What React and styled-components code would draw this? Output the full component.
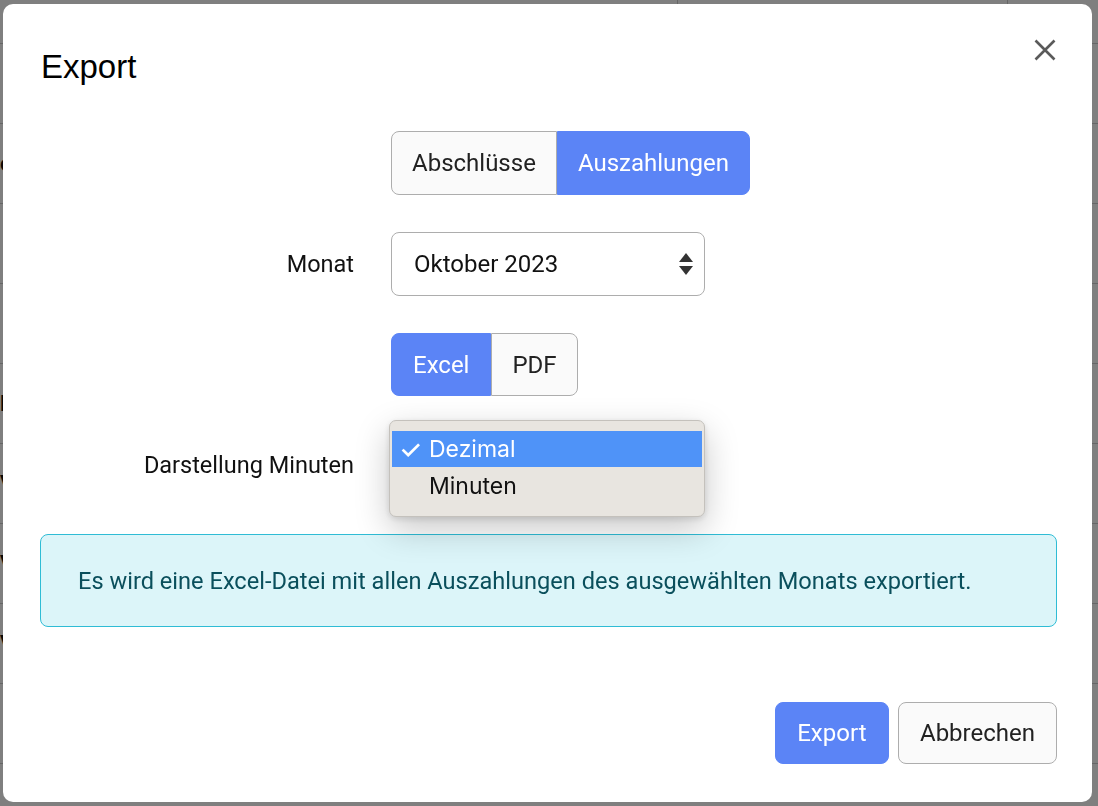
import React from 'react'
import styled, { createGlobalStyle } from 'styled-components'

const GlobalStyle = createGlobalStyle`
  html, body {
    margin: 0;
    padding: 0;
    height: 100%;
    overflow: hidden;
  }
  body {
    font-family: Roboto, 'Liberation Sans', sans-serif;
    color: #111;
    background: #ffffff;
  }
  * {
    box-sizing: border-box;
  }
`

// page behind the dialog (only a few pixels of it show)
const Page = styled.div`
  height: 100vh;
  display: flex;
  flex-direction: column;
`

const PageHead = styled.div`
  height: 44px;
  display: flex;
  justify-content: flex-end;
  border-bottom: 1px solid #ccc;
`

const HeadCell = styled.div`
  width: ${p => p.w}px;
  border-left: 1px solid #ccc;
  display: flex;
  align-items: center;
  gap: 10px;
  padding-left: 20px;
  color: #1d3a8a;
  font-size: 18px;
`

const PageRow = styled.div`
  height: 80px;
  border-bottom: 1px solid #ccc;
  display: flex;
  align-items: center;
  font-size: 22px;
  font-weight: 700;
`

const Backdrop = styled.div`
  position: fixed;
  inset: 0;
  background: rgba(0, 0, 0, 0.5);
  display: flex;
  padding: 4px 6px 4px 3px;
`

const Modal = styled.div`
  flex: 1;
  background: #fff;
  border-radius: 10px;
  display: flex;
  flex-direction: column;
`

const Header = styled.div`
  display: flex;
  justify-content: space-between;
  align-items: flex-start;
  padding: 34px 35px 0 37px;
`

const Title = styled.h2`
  margin: 10px 0 0 1px;
  font-family: 'Liberation Sans', Arial, sans-serif;
  font-weight: 400;
  font-size: 33px;
  line-height: 38px;
  color: #000;
`

const CloseButton = styled.button`
  width: 24px;
  height: 24px;
  padding: 0;
  border: 0;
  background: none;
  display: flex;
  align-items: center;
  justify-content: center;
  cursor: pointer;
`

const Body = styled.div`
  display: flex;
  flex-direction: column;
  gap: 37px;
  padding: 45px 35px 0 37px;
`

const FormRow = styled.div`
  display: grid;
  grid-template-columns: 314px auto;
  column-gap: 37px;
  align-items: center;
`

const Label = styled.label`
  text-align: right;
  font-size: 23.5px;
  color: #111;
`

const Control = styled.div`
  display: flex;
  position: relative;
`

const Group = styled.div`
  display: flex;
`

const Btn = styled.button`
  height: ${p => p.h || 64}px;
  padding: 0 ${p => p.pad || 20}px;
  font-family: Roboto, sans-serif;
  font-size: 24px;
  border: 1px solid ${p => (p.active ? '#5b84f6' : '#adadad')};
  background: ${p => (p.active ? '#5b84f6' : '#fafafa')};
  color: ${p => (p.active ? '#fff' : '#222')};
  border-radius: 8px;
  cursor: pointer;

  ${Group} > & + & {
    margin-left: -1px;
  }
  ${Group} > &:not(:last-child) {
    border-top-right-radius: 0;
    border-bottom-right-radius: 0;
  }
  ${Group} > &:not(:first-child) {
    border-top-left-radius: 0;
    border-bottom-left-radius: 0;
  }
`

const SelectBox = styled.div`
  width: 314px;
  height: 64px;
  border: 1px solid #adadad;
  border-radius: 8px;
  background: #fff;
  display: flex;
  align-items: center;
  justify-content: space-between;
  padding: 0 11px 0 22px;
  font-size: 24px;
  color: #111;
`

const Popup = styled.div`
  position: absolute;
  top: -13px;
  left: -2px;
  width: 316px;
  padding: 10px 2px 11px;
  background: #e8e5e0;
  border: 1px solid #c4c1bc;
  border-radius: 7px;
  box-shadow: 0 12px 34px rgba(0, 0, 0, 0.22), 0 2px 6px rgba(0, 0, 0, 0.12);
  font-family: Inter, 'Noto Sans', sans-serif;
  font-size: 23px;
`

const Option = styled.div`
  height: ${p => (p.selected ? 36 : 38)}px;
  display: flex;
  align-items: center;
  background: ${p => (p.selected ? '#4f93f8' : 'transparent')};
  color: ${p => (p.selected ? '#fff' : '#111')};
`

const Check = styled.span`
  width: 37px;
  padding-left: 7px;
  font-size: 26px;
  font-weight: 500;
`

const Alert = styled.div`
  border: 1px solid #2fbcd5;
  background: #dcf5f9;
  border-radius: 8px;
  height: 93px;
  display: flex;
  align-items: center;
  padding: 0 37px;
  color: #0a4f5c;
  font-size: 23.6px;
  white-space: nowrap;
`

const Footer = styled.div`
  display: flex;
  justify-content: flex-end;
  gap: 9px;
  padding: 75px 35px 0;
`

const Arrows = () => (
  <svg width="14" height="23" viewBox="0 0 14 23">
    <path d="M7 0 L14 9 L0 9 Z" fill="#333" />
    <path d="M0 13 L14 13 L7 22 Z" fill="#333" />
  </svg>
)

const DocIcon = () => (
  <svg width="16" height="20" viewBox="0 0 16 20" fill="none" stroke="#1d3a8a" strokeWidth="2">
    <path d="M2 1 H10 L15 6 V19 H2 Z" />
  </svg>
)

export default function App() {
  const rows = ['', 'e', '', '', 'B', 'V', 'V', 'V', '']
  return (
    <>
      <GlobalStyle />
      <Page>
        <PageHead>
          <HeadCell w={330}><DocIcon /> Zeiterfassung bis heute</HeadCell>
          <HeadCell w={91}><DocIcon /> Be</HeadCell>
        </PageHead>
        {rows.map((r, i) => (
          <PageRow key={`row-${i}`}>{r}</PageRow>
        ))}
      </Page>
      <Backdrop>
        <Modal>
          <Header>
            <Title>Export</Title>
            <CloseButton aria-label="Schließen">
              <svg width="22" height="22" viewBox="0 0 22 22">
                <path d="M1.5 1.5 L20.5 20.5 M20.5 1.5 L1.5 20.5" stroke="#5a5a5a" strokeWidth="2.6" />
              </svg>
            </CloseButton>
          </Header>
          <Body>
            <FormRow>
              <span />
              <Control>
                <Group>
                  <Btn>Abschlüsse</Btn>
                  <Btn active>Auszahlungen</Btn>
                </Group>
              </Control>
            </FormRow>
            <FormRow>
              <Label>Monat</Label>
              <Control>
                <SelectBox>
                  Oktober 2023
                  <Arrows />
                </SelectBox>
              </Control>
            </FormRow>
            <FormRow>
              <span />
              <Control>
                <Group>
                  <Btn active h={63} pad={21}>Excel</Btn>
                  <Btn h={63}>PDF</Btn>
                </Group>
              </Control>
            </FormRow>
            <FormRow>
              <Label>Darstellung Minuten</Label>
              <Control>
                <SelectBox>
                  Dezimal
                  <Arrows />
                </SelectBox>
                <Popup>
                  <Option selected><Check>✓</Check>Dezimal</Option>
                  <Option><Check />Minuten</Option>
                </Popup>
              </Control>
            </FormRow>
            <Alert>
              Es wird eine Excel-Datei mit allen Auszahlungen des ausgewählten Monats exportiert.
            </Alert>
          </Body>
          <Footer>
            <Btn active h={62} pad={21.5}>Export</Btn>
            <Btn h={62} pad={21}>Abbrechen</Btn>
          </Footer>
        </Modal>
      </Backdrop>
    </>
  )
}
